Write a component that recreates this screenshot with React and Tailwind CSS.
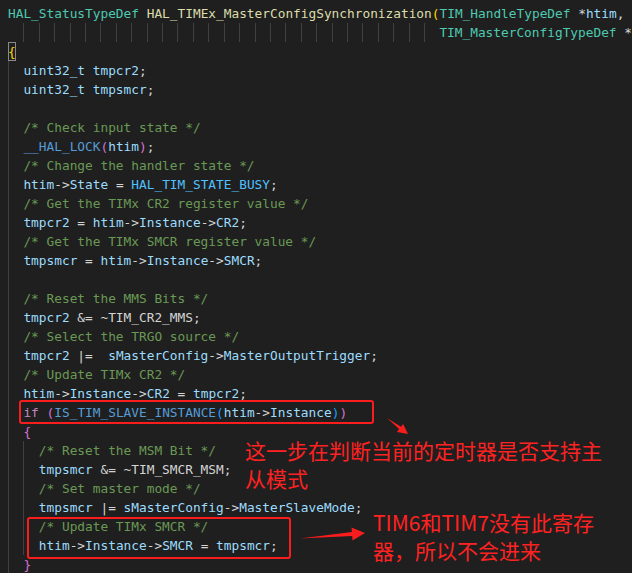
const C = {
  ty: "text-[#4EC9B0]",
  fn: "text-[#DCDCAA]",
  v: "text-[#9CDCFE]",
  op: "text-[#D4D4D4]",
  cm: "text-[#6A9955]",
  mac: "text-[#569CD6]",
  en: "text-[#4FC1FF]",
  kw: "text-[#C586C0]",
  b1: "text-[#FFD700]",
  b2: "text-[#DA70D6]",
  b3: "text-[#179FFF]",
};

// each line: indent (spaces), guide columns, tokens
const body = (t) => ({ ind: 2, g: [0], t });
const inner = (t) => ({ ind: 4, g: [0, 2], t });

const lines = [
  {
    ind: 0,
    g: [],
    t: [
      ["ty", "HAL_StatusTypeDef"],
      ["op", " "],
      ["fn", "HAL_TIMEx_MasterConfigSynchronization"],
      ["b1", "("],
      ["ty", "TIM_HandleTypeDef"],
      ["op", " *"],
      ["v", "htim"],
      ["op", ","],
    ],
  },
  {
    ind: 56,
    g: [2, 4, 6, 8, 10, 12, 14, 16, 18, 20, 22, 24, 26, 28, 30, 32, 34, 36, 38, 40, 42, 44, 46, 48, 50, 52, 54],
    t: [
      ["ty", "TIM_MasterConfigTypeDef"],
      ["op", " *"],
      ["v", "sMasterConfig"],
      ["b1", ")"],
    ],
  },
  { ind: 0, g: [], brace: true, t: [] },
  body([["v", "uint32_t tmpcr2"], ["op", ";"]]),
  body([["v", "uint32_t tmpsmcr"], ["op", ";"]]),
  body([]),
  body([["cm", "/* Check input state */"]]),
  body([["mac", "__HAL_LOCK"], ["b2", "("], ["v", "htim"], ["b2", ")"], ["op", ";"]]),
  body([["cm", "/* Change the handler state */"]]),
  body([["v", "htim"], ["op", "->"], ["v", "State"], ["op", " = "], ["en", "HAL_TIM_STATE_BUSY"], ["op", ";"]]),
  body([["cm", "/* Get the TIMx CR2 register value */"]]),
  body([["v", "tmpcr2"], ["op", " = "], ["v", "htim"], ["op", "->"], ["v", "Instance"], ["op", "->"], ["v", "CR2"], ["op", ";"]]),
  body([["cm", "/* Get the TIMx SMCR register value */"]]),
  body([["v", "tmpsmcr"], ["op", " = "], ["v", "htim"], ["op", "->"], ["v", "Instance"], ["op", "->"], ["v", "SMCR"], ["op", ";"]]),
  body([]),
  body([["cm", "/* Reset the MMS Bits */"]]),
  body([["v", "tmpcr2"], ["op", " &= ~TIM_CR2_MMS;"]]),
  body([["cm", "/* Select the TRGO source */"]]),
  body([["v", "tmpcr2"], ["op", " |=  "], ["v", "sMasterConfig"], ["op", "->"], ["v", "MasterOutputTrigger"], ["op", ";"]]),
  body([["cm", "/* Update TIMx CR2 */"]]),
  body([["v", "htim"], ["op", "->"], ["v", "Instance"], ["op", "->"], ["v", "CR2"], ["op", " = "], ["v", "tmpcr2"], ["op", ";"]]),
  body([
    ["kw", "if"],
    ["op", " "],
    ["b2", "("],
    ["mac", "IS_TIM_SLAVE_INSTANCE"],
    ["b3", "("],
    ["v", "htim"],
    ["op", "->"],
    ["v", "Instance"],
    ["b3", ")"],
    ["b2", ")"],
  ]),
  body([["b2", "{"]]),
  inner([["cm", "/* Reset the MSM Bit */"]]),
  inner([["v", "tmpsmcr"], ["op", " &= ~TIM_SMCR_MSM;"]]),
  inner([["cm", "/* Set master mode */"]]),
  inner([["v", "tmpsmcr"], ["op", " |= "], ["v", "sMasterConfig"], ["op", "->"], ["v", "MasterSlaveMode"], ["op", ";"]]),
  inner([["cm", "/* Update TIMx SMCR */"]]),
  inner([["v", "htim"], ["op", "->"], ["v", "Instance"], ["op", "->"], ["v", "SMCR"], ["op", " = "], ["v", "tmpsmcr"], ["op", ";"]]),
  body([["b2", "}"]]),
];

const CodeLine = ({ line }) => {
  const units = [];
  for (let c = 0; c < line.ind; c += 2) {
    units.push(
      <span
        key={c}
        className={
          line.g.includes(c)
            ? "inline-block w-[2ch] h-[19px] align-top border-l border-[#404040]"
            : "inline-block w-[2ch] h-[19px] align-top"
        }
      />
    );
  }
  return (
    <div className="h-[19px] leading-[19px] whitespace-pre">
      {units}
      {line.brace && (
        <span className="inline-block h-[19px] leading-[19px] text-[#FFD700] outline outline-1 -outline-offset-1 outline-[#8a8a8a]">
          {"{"}
        </span>
      )}
      {line.t.map(([k, s], i) => (
        <span key={i} className={C[k]}>
          {s}
        </span>
      ))}
    </div>
  );
};

export default function App() {
  return (
    <div className="relative w-[632px] h-[573px] overflow-hidden bg-[#1f1f1f]">
      <div className="pl-[8px] pt-[4px] font-['DejaVu_Sans_Mono',monospace] text-[12.8px]">
        {lines.map((line, i) => (
          <CodeLine key={i} line={line} />
        ))}
      </div>

      {/* annotation boxes */}
      <div className="absolute left-[19px] top-[400px] w-[355px] h-[24px] rounded-[3px] border-[2.5px] border-[#fa1d1d]" />
      <div className="absolute left-[27px] top-[517px] w-[264px] h-[42px] rounded-[3px] border-[2.5px] border-[#fa1d1d]" />

      {/* arrows */}
      <svg className="absolute inset-0" width="632" height="573" viewBox="0 0 632 573">
        <polygon
          fill="#fa1d1d"
          points="387,418 399.1,429.1 397,431.9 408,434 403.1,424 401,426.8"
        />
        <polygon
          fill="#fa1d1d"
          points="300,538.5 352.2,536 352.5,540.5 365,533 351.5,527.5 351.9,532"
        />
      </svg>

      {/* notes */}
      <div className="absolute left-[245px] top-[436px] text-[21px] leading-[28px] text-[#ff2222] font-['Noto_Sans_CJK_SC',sans-serif] whitespace-nowrap">
        这一步在判断当前的定时器是否支持主
        <br />
        从模式
      </div>
      <div className="absolute left-[373px] top-[508px] text-[21px] leading-[28px] text-[#ff2222] font-['Noto_Sans_CJK_SC',sans-serif] whitespace-nowrap">
        TIM6和TIM7没有此寄存
        <br />
        器，所以不会进来
      </div>
    </div>
  );
}
